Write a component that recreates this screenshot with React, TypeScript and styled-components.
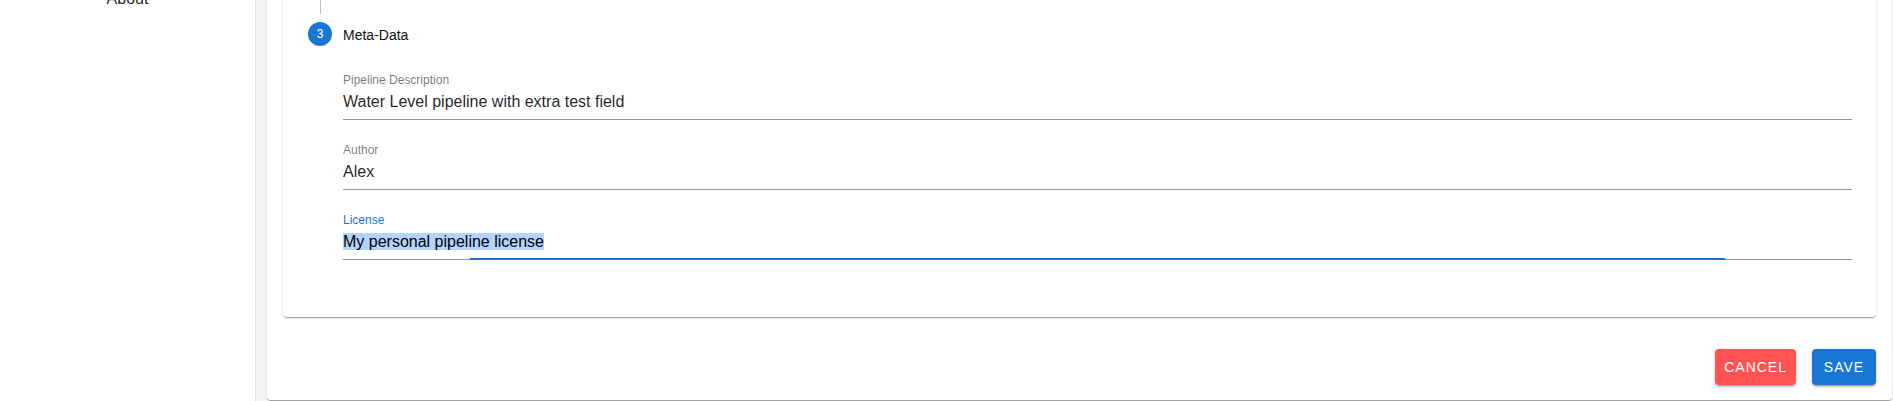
import React from "react";
import styled, { createGlobalStyle } from "styled-components";

const GlobalStyle = createGlobalStyle`
  body {
    margin: 0;
    background: #f5f5f5;
    font-family: "Liberation Sans", Arial, Helvetica, sans-serif;
    color: rgba(0, 0, 0, 0.87);
  }
`;

const elevation1 =
  "0 2px 1px -1px rgba(0,0,0,0.2), 0 1px 1px 0 rgba(0,0,0,0.14), 0 1px 3px 0 rgba(0,0,0,0.12)";
const elevation2 =
  "0 3px 1px -2px rgba(0,0,0,0.2), 0 2px 2px 0 rgba(0,0,0,0.14), 0 1px 5px 0 rgba(0,0,0,0.12)";

const fields = [
  { label: "Pipeline Description", value: "Water Level pipeline with extra test field" },
  { label: "Author", value: "Alex" },
  { label: "License", value: "My personal pipeline license", focused: true },
];

const App = () => {
  return (
    <>
      <GlobalStyle />
      <Layout>
        <Sidebar>
          <NavList>
            <NavItem>About</NavItem>
          </NavList>
        </Sidebar>

        <Main>
          <Sheet>
            <StepCard>
              <Connector />
              <StepHeader>
                <StepIcon>3</StepIcon>
                <StepTitle>Meta-Data</StepTitle>
              </StepHeader>
              <FieldList>
                {fields.map(f => (
                  <Field key={f.label} $focused={f.focused}>
                    <FieldLabel $focused={f.focused}>{f.label}</FieldLabel>
                    <FieldValue>
                      {f.focused ? <Selected>{f.value}</Selected> : f.value}
                    </FieldValue>
                  </Field>
                ))}
              </FieldList>
            </StepCard>

            <Actions>
              <ActionButton $tone="danger">Cancel</ActionButton>
              <ActionButton $tone="primary">Save</ActionButton>
            </Actions>
          </Sheet>
        </Main>
      </Layout>
    </>
  );
};

export default App;

const Layout = styled.div`
  display: flex;
  height: 401px;
  overflow: hidden;
`;

const Sidebar = styled.aside`
  width: 255px;
  flex-shrink: 0;
  background: #fff;
  border-right: 1px solid #e0e0e0;
`;

const NavList = styled.ul`
  list-style: none;
  margin: -13px 0 0;
  padding: 0;
`;

const NavItem = styled.li`
  font-size: 16px;
  line-height: 24px;
  text-align: center;
  color: rgba(0, 0, 0, 0.87);
`;

const Main = styled.main`
  flex: 1;
  min-width: 0;
  padding: 0 1px 1px 11px;
`;

const Sheet = styled.section`
  margin-top: -60px;
  padding: 16px 16px 15px;
  background: #fff;
  border-radius: 4px;
  box-shadow: ${elevation1};
`;

const StepCard = styled.div`
  padding: 24px 24px 24px 25px;
  background: #fff;
  border-radius: 4px;
  box-shadow: ${elevation1};
`;

const Connector = styled.div`
  margin-left: 12px;
  height: 34px;
  border-left: 1px solid #bdbdbd;
`;

const StepHeader = styled.div`
  display: flex;
  align-items: center;
  gap: 11px;
  padding: 8px 0;
`;

const StepIcon = styled.div`
  width: 24px;
  height: 24px;
  border-radius: 50%;
  background: #1976d2;
  color: #fff;
  font-size: 12px;
  display: grid;
  place-items: center;
  flex-shrink: 0;
`;

const StepTitle = styled.span`
  font-size: 14px;
  padding-top: 1px;
  color: #111;
`;

const FieldList = styled.div`
  display: flex;
  flex-direction: column;
  gap: 24px;
  padding: 20px 0 33px 35px;
`;

const Field = styled.div<{ $focused?: boolean }>`
  position: relative;
  border-bottom: 1px solid rgba(0, 0, 0, 0.42);

  &::after {
    content: "";
    display: ${p => (p.$focused ? "block" : "none")};
    position: absolute;
    left: 0;
    right: 0;
    bottom: -1px;
    border-bottom: 2px solid #1976d2;
    transform: scaleX(0.832);
  }
`;

const FieldLabel = styled.div<{ $focused?: boolean }>`
  font-size: 12px;
  line-height: 12px;
  margin-bottom: 2px;
  color: ${p => (p.$focused ? "#1976d2" : "rgba(0, 0, 0, 0.54)")};
`;

const FieldValue = styled.div`
  font-size: 16px;
  line-height: 19px;
  padding: 4px 0 8px;
  white-space: nowrap;
  color: rgba(0, 0, 0, 0.87);
`;

const Selected = styled.span`
  background: #b3d4fc;
  color: #000;
`;

const Actions = styled.div`
  display: flex;
  justify-content: flex-end;
  gap: 16px;
  margin-top: 32px;
`;

const ActionButton = styled.button<{ $tone: "danger" | "primary" }>`
  height: 36px;
  min-width: 64px;
  padding: 0 9px;
  border: none;
  border-radius: 4px;
  font-family: inherit;
  font-size: 14px;
  font-weight: 400;
  letter-spacing: 1px;
  text-transform: uppercase;
  color: #fff;
  background: ${p => (p.$tone === "danger" ? "#ff5252" : "#1976d2")};
  box-shadow: ${elevation2};
  cursor: pointer;
`;
